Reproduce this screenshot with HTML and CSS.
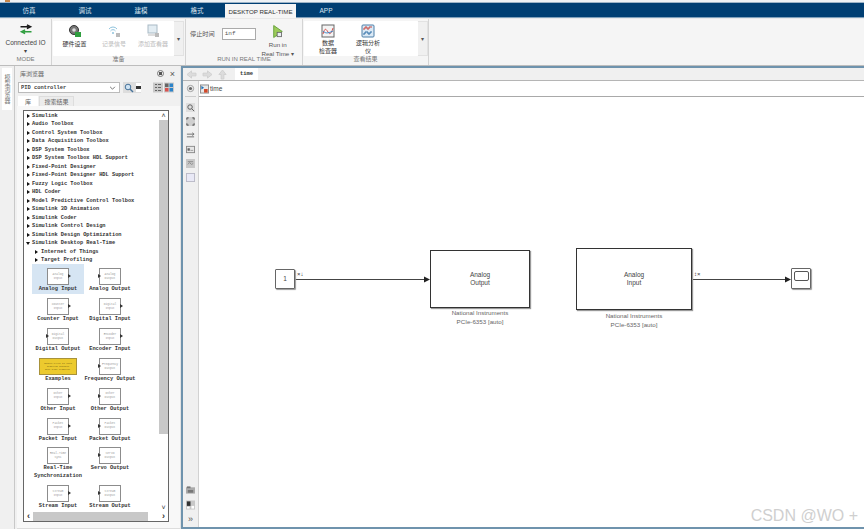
FILE: index.html
```html
<!DOCTYPE html>
<html lang="zh">
<head>
<meta charset="utf-8">
<title>time - Simulink</title>
<link rel="stylesheet" href="styles.css">
</head>
<body>
<div class="app">
  <div class="topline"><span class="logo-bit"></span></div>
  <nav class="tabs">
    <span class="tab">仿真</span><span class="tab">调试</span><span class="tab">建模</span><span class="tab">格式</span>
    <span class="tab tab-active">DESKTOP REAL-TIME</span><span class="tab">APP</span>
  </nav>
  <section class="ribbon">
    <div class="group g-mode">
      <div class="group-body mode-body">
        <svg class="ic-mode" viewBox="0 0 14 12"><path d="M1 3h9M8 1l4 2-4 2" fill="none" stroke="#1a1a1a" stroke-width="1.6"/><path d="M13 8.500H4M6 6.500l-4 2 4 2" fill="none" stroke="#2f9e3f" stroke-width="1.6"/></svg>
        <span class="mode-text">Connected IO</span>
        <span class="caret">▾</span>
      </div>
      <div class="group-label">MODE</div>
    </div>
    <div class="group g-prep">
      <div class="group-body">
        <div class="panel prep-panel">
          <div class="tool t-hw">
            <svg class="ic" viewBox="0 0 14 14"><circle cx="6" cy="6" r="4.500" fill="#777" stroke="#333"/><circle cx="6" cy="6" r="1.800" fill="#ddd"/><rect x="7" y="8" width="6" height="5" fill="#2f9e3f"/></svg>
            <span>硬件设置</span>
          </div>
          <div class="tool t-log off">
            <svg class="ic" viewBox="0 0 14 14"><path d="M2 5a5 5 0 0 1 8 0M3.500 7a3 3 0 0 1 5 0" fill="none" stroke="#8fc3dd"/><circle cx="6" cy="9" r="1" fill="#8fc3dd"/><rect x="9" y="9" width="4" height="4" fill="#bbb"/></svg>
            <span>记录信号</span>
          </div>
          <div class="tool t-view off">
            <svg class="ic" viewBox="0 0 14 14"><rect x="2" y="1" width="9" height="8" fill="#e3edf3" stroke="#a9bac5"/><path d="M2 11h7" stroke="#bbb"/><rect x="9" y="9" width="4" height="4" fill="#bbb"/></svg>
            <span>添加查看器</span>
          </div>
        </div>
        <div class="drop">▾</div>
      </div>
      <div class="group-label">准备</div>
    </div>
    <div class="group g-run">
      <div class="group-body run-body">
        <span class="stop-label">停止时间</span>
        <span class="stop-input">inf</span>
        <div class="run-btn">
          <svg class="ic-run" viewBox="0 0 14 16"><path d="M2 1l10 7-10 7z" fill="#9ccb5a" stroke="#5c9a32"/><rect x="6" y="9" width="5" height="5" fill="#e9eef2" stroke="#666"/></svg>
          <span>Run in</span>
          <span>Real Time ▾</span>
        </div>
      </div>
      <div class="group-label">RUN IN REAL TIME</div>
    </div>
    <div class="group g-view">
      <div class="group-body">
        <div class="panel view-panel">
          <div class="tool t-sdi">
            <svg class="ic-lg" viewBox="0 0 14 14"><rect x="1" y="1" width="12" height="12" fill="#f4f4f4" stroke="#666"/><path d="M2 10c2-7 3-5 5-2s3 2 5-4" fill="none" stroke="#d9534f"/><path d="M2 7c2 2 4 3 10 0" fill="none" stroke="#3b83c4"/></svg>
            <span>数据<br>检查器</span>
          </div>
          <div class="tool t-logic">
            <svg class="ic-lg" viewBox="0 0 14 14"><rect x="1" y="1" width="12" height="12" rx="1" fill="#dbe9f5" stroke="#4c7ea8"/><path d="M2 5h2V3h2v2h2V3h3" fill="none" stroke="#c9453c"/><path d="M2 10h2V8h3v2h2V8h2" fill="none" stroke="#2f6ea5"/></svg>
            <span>逻辑分析<br>仪</span>
          </div>
        </div>
        <div class="drop">▾</div>
      </div>
      <div class="group-label">查看结果</div>
    </div>
  </section>
  <main class="main">
    <aside class="strip"><span class="strip-tab">模型浏览器</span></aside>
    <section class="lib">
      <header class="lib-head">
        <span class="lib-title">库浏览器</span>
        <span class="lib-actions"><span class="circle-btn"></span><span class="close-btn">×</span></span>
      </header>
      <div class="lib-search">
        <div class="search-input"><span>PID controller</span><svg class="chev" viewBox="0 0 8 5"><path d="M1 1l3 3 3-3" fill="none" stroke="#555"/></svg></div>
        <div class="search-btn">
          <svg class="ic-search" viewBox="0 0 10 10"><circle cx="4" cy="4" r="2.800" fill="#cfe3f3" stroke="#47739a"/><path d="M6 6l3 3" stroke="#47739a" stroke-width="1.400"/></svg>
          <span class="mini-drop"></span>
        </div>
        <div class="view-btns">
          <svg class="vb" viewBox="0 0 10 10"><rect width="10" height="10" fill="#c9c9c9"/><path d="M2 2h2M5 2h3M2 5h2M5 5h3M2 8h2M5 8h3" stroke="#666"/></svg>
          <svg class="vb" viewBox="0 0 10 10"><rect width="10" height="10" fill="#c9c9c9"/><rect x="1" y="1" width="3.500" height="3.500" fill="#666"/><rect x="5.500" y="1" width="3.500" height="3.500" fill="#2b83c9"/><rect x="1" y="5.500" width="3.500" height="3.500" fill="#d9534f"/><rect x="5.500" y="5.500" width="3.500" height="3.500" fill="#2b83c9"/></svg>
        </div>
      </div>
      <div class="lib-tabs"><span class="ltab ltab-on">库</span><span class="ltab">搜索结果</span></div>
      <div class="lib-page">
        <div class="treebox">
          <div class="tree-main">
            <div class="tree-view">
              <ul class="tree">
                <li class="r">Simulink</li>
                <li class="r">Audio Toolbox</li>
                <li class="r">Control System Toolbox</li>
                <li class="r">Data Acquisition Toolbox</li>
                <li class="r">DSP System Toolbox</li>
                <li class="r">DSP System Toolbox HDL Support</li>
                <li class="r">Fixed-Point Designer</li>
                <li class="r">Fixed-Point Designer HDL Support</li>
                <li class="r">Fuzzy Logic Toolbox</li>
                <li class="r">HDL Coder</li>
                <li class="r">Model Predictive Control Toolbox</li>
                <li class="r">Simulink 3D Animation</li>
                <li class="r">Simulink Coder</li>
                <li class="r">Simulink Control Design</li>
                <li class="r">Simulink Design Optimization</li>
                <li class="r open">Simulink Desktop Real-Time</li>
                <li class="r sub">Internet of Things</li>
                <li class="r sub">Target Profiling</li>
              </ul>
              <div class="blocks">
                <div class="blk sel"><div class="bx out">Analog<br>Input</div><div class="bl">Analog Input</div></div>
                <div class="blk"><div class="bx in">Analog<br>Output</div><div class="bl">Analog Output</div></div>
                <div class="blk"><div class="bx out">Counter<br>Input</div><div class="bl">Counter Input</div></div>
                <div class="blk"><div class="bx out">Digital<br>Input</div><div class="bl">Digital Input</div></div>
                <div class="blk"><div class="bx in">Digital<br>Output</div><div class="bl">Digital Output</div></div>
                <div class="blk"><div class="bx out">Encoder<br>Input</div><div class="bl">Encoder Input</div></div>
                <div class="blk"><div class="bx note">Double-click to open<br>Simulink Desktop<br>Real-Time examples.</div><div class="bl">Examples</div></div>
                <div class="blk"><div class="bx in">Frequency<br>Output</div><div class="bl">Frequency Output</div></div>
                <div class="blk"><div class="bx out">Other<br>Input</div><div class="bl">Other Input</div></div>
                <div class="blk"><div class="bx in">Other<br>Output</div><div class="bl">Other Output</div></div>
                <div class="blk"><div class="bx out">Packet<br>Input</div><div class="bl">Packet Input</div></div>
                <div class="blk"><div class="bx in">Packet<br>Output</div><div class="bl">Packet Output</div></div>
                <div class="blk"><div class="bx">Real-Time<br>Sync</div><div class="bl">Real-Time<br>Synchronization</div></div>
                <div class="blk"><div class="bx in">Servo<br>Output</div><div class="bl">Servo Output</div></div>
                <div class="blk"><div class="bx out">Stream<br>Input</div><div class="bl">Stream Input</div></div>
                <div class="blk"><div class="bx in">Stream<br>Output</div><div class="bl">Stream Output</div></div>
              </div>
            </div>
            <div class="vscroll">
              <span class="sa">˄</span><span class="vthumb"></span><span class="vtrack"></span><span class="sa">˅</span>
            </div>
          </div>
          <div class="hscroll"><span class="sa-h">‹</span><span class="hthumb"></span><span class="htrack"></span><span class="sa-h">›</span></div>
        </div>
      </div>
    </section>
    <section class="work">
      <div class="navbar">
        <svg class="nav" viewBox="0 0 12 10"><path d="M1 5l5-4v2.500h5v3H6V9z" fill="#dcdcdc" stroke="#cfcfcf"/></svg>
        <svg class="nav" viewBox="0 0 12 10"><path d="M11 5L6 1v2.500H1v3h5V9z" fill="#dcdcdc" stroke="#cfcfcf"/></svg>
        <svg class="nav nav-up" viewBox="0 0 10 12"><path d="M5 1l4 5H6.500v5h-3V6H1z" fill="#dcdcdc" stroke="#cfcfcf"/></svg>
        <span class="model-tab">time</span>
      </div>
      <div class="work-body">
        <div class="palette">
          <div class="pal-top"><svg class="pi" viewBox="0 0 10 10"><circle cx="5" cy="5" r="3.500" fill="#eee" stroke="#999"/><circle cx="5" cy="5" r="1.800" fill="#666"/></svg></div>
          <svg class="pi" viewBox="0 0 10 10"><rect width="10" height="10" fill="#dedede"/><circle cx="4.500" cy="4.500" r="2.500" fill="none" stroke="#555"/><path d="M6.500 6.500L9 9" stroke="#555"/></svg>
          <svg class="pi" viewBox="0 0 10 10"><rect width="10" height="10" fill="#cfcfcf"/><path d="M1 3V1h2M7 1h2v2M9 7v2H7M3 9H1V7" fill="none" stroke="#444"/></svg>
          <svg class="pi" viewBox="0 0 10 10"><path d="M1 3.500h7M1 6.500h8" stroke="#666"/><path d="M7 2l2 1.500L7 5" fill="none" stroke="#666"/></svg>
          <svg class="pi" viewBox="0 0 10 10"><rect x=".5" y="1.500" width="9" height="7" fill="#e6e6e6" stroke="#888"/><path d="M2 4h2v2H2zM5 6h3" fill="#666" stroke="#666" stroke-width=".6"/></svg>
          <svg class="pi" viewBox="0 0 10 10"><rect width="10" height="10" fill="#c8c8c8"/><path d="M2 3h6M2 6l2-2 2 2 2-1" fill="none" stroke="#888"/></svg>
          <svg class="pi" viewBox="0 0 10 10"><rect x=".5" y=".5" width="9" height="9" fill="#e9e9f6" stroke="#b9b9c6"/></svg>
          <div class="pal-spring"></div>
          <svg class="pi pi-b" viewBox="0 0 10 10"><rect y="2" width="10" height="7" fill="#aaa"/><rect x="1" y="1" width="4" height="2" fill="#777"/><rect x="2" y="5" width="6" height="3" fill="#777"/></svg>
          <svg class="pi pi-b" viewBox="0 0 10 10"><rect width="10" height="10" fill="#c8c8c8"/><rect x="1" y="1" width="4" height="5" fill="#333"/><rect x="6" y="6" width="3" height="3" fill="#fff"/><rect x="1" y="7" width="3" height="2" fill="#fff"/></svg>
          <span class="pal-more">»</span>
        </div>
        <div class="editor">
          <div class="crumb">
            <svg class="crumb-ic" viewBox="0 0 10 10"><rect x=".5" y=".5" width="9" height="9" fill="#e8e8e8" stroke="#888"/><path d="M1.500 1.500l3 2-3 2z" fill="#1b6fb8"/><rect x="4.500" y="5" width="4" height="4" fill="#d2492a"/></svg>
            <span>time</span>
          </div>
          <div class="canvas">
            <svg class="wires" viewBox="0 0 665 431">
              <path d="M96 182.500H226" stroke="#444" fill="none"/>
              <path d="M225 179.500l6 3-6 3z" fill="#222"/>
              <path d="M493 182.500H587" stroke="#444" fill="none"/>
              <path d="M586 179.500l6 3-6 3z" fill="#222"/>
            </svg>
            <div class="node const">1</div>
            <span class="port-mark pm-a">×↓</span>
            <div class="node io io-out">Analog<br>Output</div>
            <div class="caption cap-out">National Instruments<br>PCIe-6353 [auto]</div>
            <div class="node io io-in">Analog<br>Input</div>
            <div class="caption cap-in">National Instruments<br>PCIe-6353 [auto]</div>
            <span class="port-mark pm-b">↕×</span>
            <div class="node scope"><span class="screen"></span></div>
            <span class="wm">CSDN @WO +</span>
          </div>
        </div>
      </div>
    </section>
  </main>
  <div class="bottom"></div>
</div>
</body>
</html>
```
FILE: styles.css
```css
* { box-sizing: border-box; }
html, body { margin: 0; padding: 0; }
body { background: #fff; font-family: "Liberation Sans", "Noto Sans CJK SC", sans-serif; color: #333; }
ul { list-style: none; margin: 0; padding: 0; }
.app { width: 864px; height: 530px; display: flex; flex-direction: column; overflow: hidden; }

.topline { height: 3px; flex: none; background: #eef2f5; border-bottom: 1px solid #9db4c7; position: relative; }
.logo-bit { display: block; width: 5px; height: 2px; margin-left: 5px; background: #c8874a; }

.tabs { height: 15px; flex: none; display: flex; background: #003f73; color: #d9e4ee; font-size: 6.500px; padding-left: 1px; border-bottom: 1px solid #7fa0bb; }
.tab { width: 56px; display: flex; align-items: center; justify-content: center; }
.tab-active { width: 71px; background: #f5f5f5; color: #333; font-size: 6.200px; margin-top: 1px; margin-bottom: -1px; }
.tab:last-child { width: 60px; }

.ribbon { height: 48px; flex: none; display: flex; background: #f5f5f5; border-bottom: 1px solid #bdbdbd; border-top: 1px solid #e8e8e8; }
.group { display: flex; flex-direction: column; border-right: 1px solid #d4d4d4; }
.group-body { flex: 1; display: flex; padding: 2px 0 0 1px; min-height: 0; }
.group-label { height: 10px; flex: none; font-size: 6px; line-height: 9px; color: #777; text-align: center; }
.g-mode { width: 52px; }
.g-prep { width: 134px; }
.g-run { width: 117px; }
.g-view { width: 126px; }

.mode-body { flex-direction: column; align-items: center; font-size: 6.500px; padding: 5px 0 0; color: #444; }
.ic-mode { width: 14px; height: 12px; }
.mode-text { margin-top: 4px; line-height: 8px; white-space: nowrap; }
.caret { font-size: 6px; line-height: 8px; }

.panel { background: #fff; height: 35px; display: flex; border-radius: 1px; }
.prep-panel { width: 121px; }
.view-panel { width: 114px; }
.drop { width: 10px; height: 35px; background: #f0f0f0; border: 1px solid #e2e2e2; border-left: 0; font-size: 6px; color: #555; display: flex; align-items: center; justify-content: center; }

.tool { display: flex; flex-direction: column; align-items: center; font-size: 6px; line-height: 8px; padding-top: 3px; text-align: center; white-space: nowrap; }
.tool.off { color: #bcbcbc; }
.t-hw { width: 43px; }
.t-log { width: 36px; }
.t-view { width: 42px; }
.t-sdi { width: 44px; padding-left: 4px; }
.t-logic { width: 36px; margin-left: 2px; }
.ic { width: 14px; height: 14px; margin-bottom: 2px; }
.ic-lg { width: 14px; height: 14px; margin-bottom: 1px; }

.run-body { padding: 5px 0 0 4px; font-size: 6.200px; color: #555; align-items: flex-start; }
.stop-label { margin-top: 6px; white-space: nowrap; line-height: 8px; }
.stop-input { width: 34px; height: 12px; margin: 4px 0 0 7px; border: 1px solid #aaa; background: #fff; font-family: "Liberation Mono", monospace; font-size: 6px; line-height: 10px; padding-left: 2px; }
.run-btn { display: flex; flex-direction: column; align-items: center; margin-left: 2px; width: 40px; line-height: 8.500px; white-space: nowrap; }
.ic-run { width: 12px; height: 15px; margin-bottom: 2px; }

.main { flex: 1; min-height: 0; display: flex; background: #f0f0f0; }
.strip { width: 15px; flex: none; border-right: 1px solid #c8c8c8; padding: 2px 0 0 2px; background: #f0f0f0; }
.strip-tab { display: block; width: 10px; height: 42px; background: #fff; writing-mode: vertical-rl; font-size: 6px; line-height: 10px; color: #777; text-align: center; }

.lib { width: 166px; flex: none; display: flex; flex-direction: column; background: #f0f0f0; border-right: 1px solid #e4e4e4; }
.lib-head { height: 15px; display: flex; justify-content: space-between; align-items: center; padding: 0 5px 0 5px; font-size: 6px; color: #666; flex: none; }
.lib-actions { display: flex; align-items: center; gap: 6px; }
.circle-btn { width: 7px; height: 7px; border-radius: 50%; border: 1px solid #777; background: radial-gradient(circle, #555 1.500px, #eee 2px); }
.close-btn { font-size: 9px; line-height: 8px; color: #555; }

.lib-search { height: 13px; flex: none; display: flex; padding: 1px 6px 0 3px; }
.search-input { width: 102px; height: 11px; background: #fff; border: 1px solid #bbb; display: flex; justify-content: space-between; align-items: center; padding: 0 3px 0 2px; font-family: "Liberation Mono", monospace; font-size: 5.400px; font-weight: bold; color: #444; }
.chev { width: 7px; height: 4px; }
.search-btn { width: 18px; height: 11px; margin-left: 3px; display: flex; align-items: center; background: #ddd; padding-left: 1px; }
.ic-search { width: 10px; height: 10px; }
.mini-drop { width: 5px; height: 9px; margin-left: 2px; background: linear-gradient(#fff, #fff); position: relative; border-top: 3px solid #fff; border-bottom: 3px solid #fff; box-shadow: inset 0 0 0 1.500px #333; }
.view-btns { display: flex; gap: 1px; margin-left: auto; }
.vb { width: 10px; height: 11px; }

.lib-tabs { height: 11px; flex: none; display: flex; padding: 1px 0 0 3px; margin-top: 1px; font-size: 6px; color: #666; }
.ltab { display: flex; align-items: center; justify-content: center; width: 20px; background: #fff; }
.ltab + .ltab { width: 35px; background: #ececec; border: 1px solid #ddd; border-bottom: 0; margin-left: 1px; }

.lib-page { flex: 1; min-height: 0; background: #f8f8f8; margin: 0 0 0 2px; padding: 4px 6px 6px 6px; border-bottom: 1px solid #ddd; }
.treebox { height: 100%; width: 146px; border: 1px solid #666; display: flex; flex-direction: column; background: #fff; }
.tree-main { flex: 1; min-height: 0; display: flex; }
.tree-view { flex: 1; min-width: 0; overflow: hidden; padding-top: 1px; font-family: "Liberation Mono", monospace; color: #333; font-weight: bold; }
.tree .r { height: 8.470px; line-height: 8.470px; font-size: 5.330px; padding-left: 8px; white-space: nowrap; position: relative; }
.tree .r::before { content: ""; position: absolute; left: 2.500px; top: 2px; border-left: 3.500px solid #111; border-top: 2.300px solid transparent; border-bottom: 2.300px solid transparent; }
.tree .open::before { left: 2px; top: 3px; border-top: 3.500px solid #111; border-left: 2.300px solid transparent; border-right: 2.300px solid transparent; border-bottom: 0; }
.tree .sub { padding-left: 17px; }
.tree .sub::before { left: 11px; }

.blocks { display: grid; grid-template-columns: 52px 52px; padding-left: 8px; margin-top: 0; align-items: start; }
.blk { padding-top: 4px; display: flex; flex-direction: column; align-items: center; }
.sel { background: #d6e5f3; height: 30px; }
.bx { width: 22px; height: 17px; border: 1px solid #8c8c8c; background: #fff; font-size: 3px; line-height: 4px; font-weight: normal; color: #999; display: flex; align-items: center; justify-content: center; text-align: center; position: relative; }
.bx.out::after { content: ""; position: absolute; right: -3px; top: 5px; border-left: 3px solid #333; border-top: 2.500px solid transparent; border-bottom: 2.500px solid transparent; }
.bx.in::before { content: ""; position: absolute; left: -2px; top: 5px; border-left: 3px solid #333; border-top: 2.500px solid transparent; border-bottom: 2.500px solid transparent; }
.note { width: 38px; background: #ecca2e; border-color: #a8923a; color: #6e5a12; font-size: 2.300px; line-height: 3px; margin-top: 0; }
.bl { margin-top: 1px; font-size: 5.330px; line-height: 7.800px; text-align: center; white-space: nowrap; color: #333; }

.vscroll { width: 9px; flex: none; display: flex; flex-direction: column; background: #fff; }
.sa { height: 9px; flex: none; font-size: 7px; line-height: 9px; text-align: center; color: #333; font-family: "Liberation Sans", sans-serif; }
.vthumb { height: 314px; flex: none; background: #c8c8c8; }
.vtrack { flex: 1; background: #fff; }
.hscroll { height: 9px; flex: none; display: flex; background: #fff; }
.sa-h { width: 9px; flex: none; font-size: 9px; line-height: 8px; text-align: center; color: #333; font-weight: bold; }
.hthumb { width: 115px; background: #c8c8c8; }
.htrack { flex: 1; }

.work { flex: 1; min-width: 0; display: flex; flex-direction: column; border-left: 2px solid #6f93ad; border-top: 2px solid #6f93ad; border-bottom: 2px solid #6f93ad; margin-left: 0; }
.navbar { height: 13px; flex: none; display: flex; align-items: center; background: #f0f0f0; padding-left: 3px; border-bottom: 1px solid #b5b5b5; }
.nav { width: 11px; height: 9px; margin-right: 5px; }
.nav-up { width: 9px; height: 11px; }
.model-tab { width: 23px; height: 12px; margin-left: 3px; background: #fff; font-family: "Liberation Mono", monospace; font-weight: bold; font-size: 5.500px; line-height: 12px; text-align: center; }
.work-body { flex: 1; min-height: 0; display: flex; }
.palette { width: 16px; flex: none; display: flex; flex-direction: column; align-items: center; gap: 5px; background: #f0f0f0; border-right: 1px solid #d2d2d2; padding-bottom: 3px; }
.pal-top { width: 11px; height: 16px; display: flex; align-items: center; justify-content: center; border-bottom: 1px solid #ccc; flex: none; margin-bottom: 1px; padding-bottom: 1px; }
.pi { width: 9px; height: 9px; flex: none; }
.pi-b { width: 9px; height: 10px; }
.pal-spring { flex: 1; }
.pal-more { font-size: 9px; line-height: 9px; color: #555; }
.editor { flex: 1; min-width: 0; display: flex; flex-direction: column; }
.crumb { height: 16px; flex: none; display: flex; align-items: center; gap: 1px; padding-left: 1px; border-bottom: 1px solid #a9a9a9; background: #fff; font-size: 6.500px; color: #444; }
.crumb-ic { width: 9px; height: 10px; }
.canvas { flex: 1; min-height: 0; position: relative; background: #fff; overflow: hidden; }

.wires { position: absolute; left: 0; top: 0; width: 665px; height: 431px; }
.node { position: absolute; background: #fff; border: 1px solid #333; box-shadow: 1px 1px 1px #999; display: flex; align-items: center; justify-content: center; text-align: center; font-size: 6.500px; line-height: 8.200px; color: #444; }
.const { left: 76px; top: 172px; width: 20px; height: 20px; border-color: #666; border-radius: 1px; }
.io-out { left: 231px; top: 153px; width: 100px; height: 58px; }
.io-in { left: 377px; top: 151px; width: 116px; height: 62px; }
.scope { left: 592px; top: 171px; width: 20px; height: 21px; border-color: #666; border-radius: 1px; }
.screen { width: 15px; height: 10px; border: 1px solid #555; border-radius: 2px; margin-top: -5px; }
.caption { position: absolute; font-size: 6.200px; line-height: 8.600px; text-align: center; color: #666; white-space: nowrap; }
.cap-out { left: 231px; top: 212px; width: 100px; }
.cap-in { left: 377px; top: 215px; width: 116px; }
.port-mark { position: absolute; font-size: 6px; line-height: 7px; color: #333; white-space: nowrap; }
.pm-a { left: 98px; top: 174px; }
.pm-b { left: 495px; top: 174px; }
.wm { position: absolute; right: 6px; bottom: 1px; font-size: 16px; line-height: 20px; color: #cfcfcf; white-space: nowrap; }
.bottom { height: 1px; flex: none; background: #fff; }
```
